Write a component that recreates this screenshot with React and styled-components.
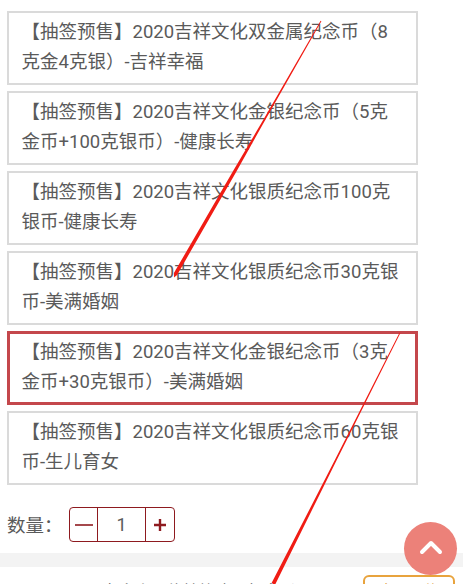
import React from "react";
import styled, { createGlobalStyle } from "styled-components";

const GlobalStyle = createGlobalStyle`
  html, body {
    margin: 0;
    padding: 0;
    background: #fff;
  }
  body {
    font-family: "Roboto", "Noto Sans CJK SC", sans-serif;
    color: #555;
  }
`;

const Page = styled.div`
  position: relative;
  width: 463px;
  height: 584px;
  overflow: hidden;
  background: #fff;
`;

const OptionList = styled.div`
  display: flex;
  flex-direction: column;
  gap: 5.8px;
  width: 411px;
  padding: 11px 0 0 7px;
`;

const Option = styled.div`
  box-sizing: border-box;
  height: 74.2px;
  border: ${(p) => (p.$active ? "3px solid #c4474c" : "2px solid #dadada")};
  padding: ${(p) => (p.$active ? "3px 12px 0 11.5px" : "4px 13px 0 12.5px")};
  font-size: 18.5px;
  line-height: 30px;
  color: #5a5a5a;
`;

const QuantityRow = styled.div`
  display: flex;
  align-items: center;
  margin: 22px 0 0 7px;
`;

const QuantityLabel = styled.span`
  width: 62px;
  padding-bottom: 2px;
  font-size: 18.5px;
  color: #5a5a5a;
`;

const Stepper = styled.div`
  box-sizing: border-box;
  display: flex;
  width: 106px;
  height: 35px;
  border: 1px solid #8e1a1f;
  border-radius: 4px;
`;

const StepButton = styled.div`
  display: flex;
  align-items: center;
  justify-content: center;
  width: ${(p) => (p.$wide ? "28px" : "27px")};
  color: #8e1a1f;
`;

const StepValue = styled.div`
  display: flex;
  align-items: center;
  justify-content: center;
  flex: 1;
  border-left: 1px solid #8e1a1f;
  border-right: 1px solid #8e1a1f;
  font-size: 18px;
  color: #5a5a5a;
`;

const Band = styled.div`
  height: 14px;
  margin-top: 11px;
  background: #f3f3f3;
`;

const Footer = styled.div`
  display: flex;
  align-items: flex-start;
  justify-content: space-between;
  padding: 8px 8px 0 87px;
`;

const FooterText = styled.span`
  margin-top: 8px;
  font-size: 16px;
  line-height: 18px;
  color: #666;
`;

const FooterButton = styled.div`
  box-sizing: border-box;
  width: 92px;
  height: 32px;
  border: 2px solid #e8a33d;
  border-radius: 6px;
  text-align: center;
  font-size: 15px;
  line-height: 29px;
  color: #e09a3b;
`;

const BackToTop = styled.div`
  position: absolute;
  left: 404px;
  top: 522px;
  box-sizing: border-box;
  display: flex;
  align-items: center;
  justify-content: center;
  width: 53px;
  height: 53px;
  padding-bottom: 3px;
  border-radius: 50%;
  background: #ec8179;
`;

const Overlay = styled.svg`
  position: absolute;
  left: 0;
  top: 0;
  pointer-events: none;
`;

const options = [
  { text: "【抽签预售】2020吉祥文化双金属纪念币（8克金4克银）-吉祥幸福" },
  { text: "【抽签预售】2020吉祥文化金银纪念币（5克金币+100克银币）-健康长寿" },
  { text: "【抽签预售】2020吉祥文化银质纪念币100克银币-健康长寿" },
  { text: "【抽签预售】2020吉祥文化银质纪念币30克银币-美满婚姻" },
  { text: "【抽签预售】2020吉祥文化金银纪念币（3克金币+30克银币）-美满婚姻", active: true },
  { text: "【抽签预售】2020吉祥文化银质纪念币60克银币-生儿育女" },
];

export default function App() {
  return (
    <Page>
      <GlobalStyle />
      <OptionList>
        {options.map((o) => (
          <Option key={o.text} $active={o.active}>
            {o.text}
          </Option>
        ))}
      </OptionList>
      <QuantityRow>
        <QuantityLabel>数量：</QuantityLabel>
        <Stepper>
          <StepButton>
            <svg width="18" height="18" viewBox="0 0 18 18">
              <path d="M0 9h18" stroke="currentColor" strokeWidth="1.6" />
            </svg>
          </StepButton>
          <StepValue>1</StepValue>
          <StepButton $wide>
            <svg width="14" height="14" viewBox="0 0 14 14">
              <path d="M1 7h12M7 1v12" stroke="currentColor" strokeWidth="2.4" />
            </svg>
          </StepButton>
        </Stepper>
      </QuantityRow>
      <Band />
      <Footer>
        <FooterText>已有多人预约抽签购买纪念币</FooterText>
        <FooterButton>立即预约</FooterButton>
      </Footer>
      <BackToTop>
        <svg width="26" height="16" viewBox="0 0 26 16">
          <path d="M4 13 13 4l9 9" fill="none" stroke="#fff" strokeWidth="4" strokeLinecap="round" strokeLinejoin="round" />
        </svg>
      </BackToTop>
      <Overlay width="463" height="584" viewBox="0 0 463 584">
        <polygon
          points="321.4,21.2 262.7,124.4 236.3,171.8 177.1,274.9 174,277.5 173.9,273.1 233.5,170.2 261.1,123.6 320.6,20.8"
          fill="#f01c14"
        />
        <polygon
          points="400.4,332.9 336.5,460.4 275,584.9 271.6,583.1 335.1,459.6 399.6,332.5"
          fill="#f01c14"
        />
      </Overlay>
    </Page>
  );
}
